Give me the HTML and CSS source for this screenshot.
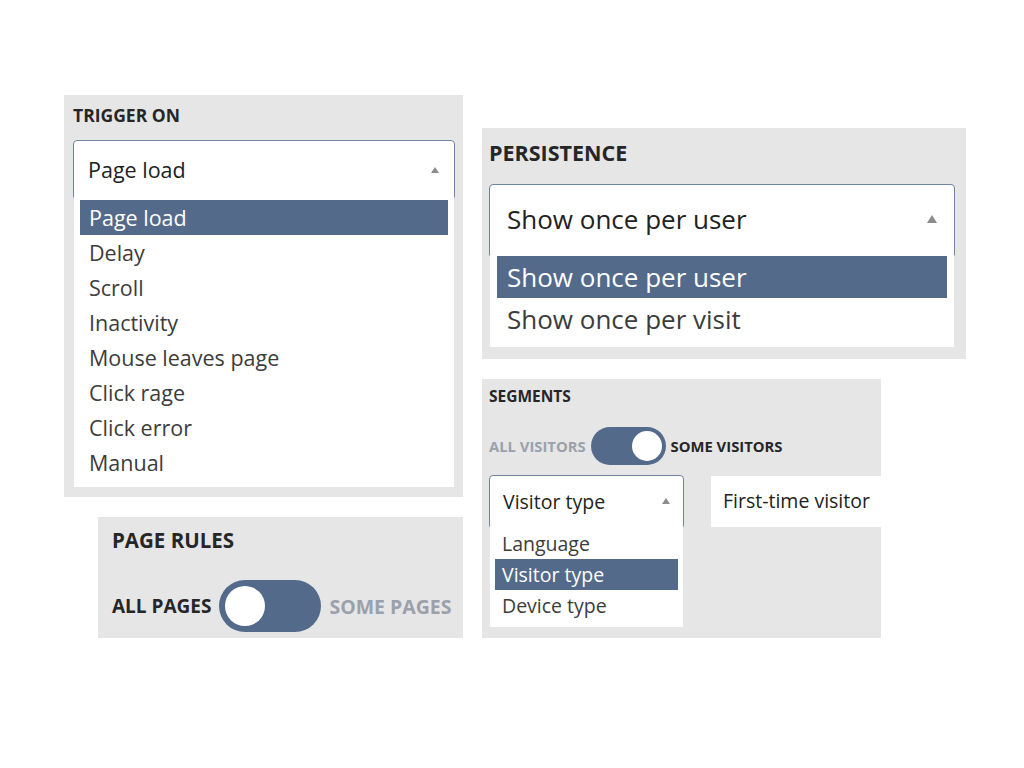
FILE: index.html
```html
<!doctype html>
<html>
  <head>
    <title>Popup settings</title>
    <meta charset="utf-8" />
    <link rel="stylesheet" href="styles.css">
  </head>
  <body>
  <div class="board">
    <div class="column column-left">

      <div class="panel panel-trigger">
        <div class="label">TRIGGER ON</div>
        <div class="select">
          <span class="value">Page load</span>
          <span class="arrow"></span>
        </div>
        <ul class="options">
          <li class="selected">Page load</li>
          <li>Delay</li>
          <li>Scroll</li>
          <li>Inactivity</li>
          <li>Mouse leaves page</li>
          <li>Click rage</li>
          <li>Click error</li>
          <li>Manual</li>
        </ul>
      </div>

      <div class="panel panel-pages">
        <div class="label">PAGE RULES</div>
        <div class="switch-row">
          <span class="switch-label on">ALL PAGES</span>
          <span class="switch"><span class="knob"></span></span>
          <span class="switch-label off">SOME PAGES</span>
        </div>
      </div>

    </div>
    <div class="column column-right">

      <div class="panel panel-persist">
        <div class="label">PERSISTENCE</div>
        <div class="select">
          <span class="value">Show once per user</span>
          <span class="arrow"></span>
        </div>
        <ul class="options">
          <li class="selected">Show once per user</li>
          <li>Show once per visit</li>
        </ul>
      </div>

      <div class="panel panel-segments">
        <div class="label">SEGMENTS</div>
        <div class="switch-row">
          <span class="switch-label off">ALL VISITORS</span>
          <span class="switch right"><span class="knob"></span></span>
          <span class="switch-label on">SOME VISITORS</span>
        </div>
        <div class="segment-row">
          <div class="segment-pick">
            <div class="select">
              <span class="value">Visitor type</span>
              <span class="arrow"></span>
            </div>
            <ul class="options">
              <li>Language</li>
              <li class="selected">Visitor type</li>
              <li>Device type</li>
            </ul>
          </div>
          <div class="segment-value">First-time visitor</div>
        </div>
      </div>

    </div>
  </div>
  </body>
</html>
```

FILE: styles.css
```css
* {
	padding:0;
	margin:0;
	box-sizing:border-box;
}

body {
	background-color:white;
	font-family:"Open Sans", "Noto Sans", sans-serif;
	color:#2b2b2b;
}

.board {
	display:flex;
	gap:19px;
	padding:95px 0 0 64px;
}

.column {
	display:flex;
	flex-direction:column;
	gap:20px;
}

.column-left {
	width:399px;
	align-items:flex-end;
}

.column-right {
	margin-top:33px;
	align-items:flex-start;
}

.panel {
	background-color:#e6e6e6;
}

.label {
	font-weight:700;
	color:#262626;
	white-space:nowrap;
}

/* select box + open list */

.select {
	display:flex;
	align-items:center;
	justify-content:space-between;
	background-color:white;
	border:1px solid #7083a0;
	border-radius:4px;
	color:#222;
}

.arrow {
	width:0;
	height:0;
	border-left:4px solid transparent;
	border-right:4px solid transparent;
	border-bottom:6px solid #8c8c8c;
}

.options {
	list-style:none;
	background-color:white;
	margin:-3px 1px 0 1px;
	color:#3c3c3c;
}

.options li.selected {
	background-color:#536a8b;
	color:white;
}

/* trigger on */

.panel-trigger {
	width:399px;
	padding:10px 8px 10px 9px;
}

.panel-trigger .label {
	font-size:17.5px;
	line-height:21px;
	margin-bottom:14px;
}

.panel-trigger .select {
	height:60px;
	padding:0 15px 1px 14px;
	font-size:21.5px;
}

.panel-trigger .options {
	padding:3px 6px 7px 6px;
}

.panel-trigger .options li {
	font-size:21.5px;
	line-height:35px;
	padding-left:9px;
}

/* persistence */

.panel-persist {
	width:484px;
	padding:13px 11px 12px 7px;
}

.panel-persist .label {
	font-size:21.5px;
	line-height:24px;
	margin-bottom:19px;
}

.panel-persist .select {
	height:74px;
	padding:0 17px 4px 17px;
	font-size:26px;
}

.panel-persist .arrow {
	border-left-width:5px;
	border-right-width:5px;
	border-bottom-width:8px;
}

.panel-persist .options {
	padding:1px 7px 7px 7px;
}

.panel-persist .options li {
	font-size:26px;
	line-height:42px;
	padding-left:10px;
}

/* segments */

.panel-segments {
	width:399px;
	padding:8px 0 11px 7px;
	overflow:hidden;
}

.panel-segments .label {
	font-size:15.5px;
	line-height:18px;
	margin-bottom:22px;
}

.panel-segments .switch-row {
	margin-bottom:10px;
}

.segment-row {
	display:flex;
	align-items:flex-start;
	gap:27px;
}

.segment-pick {
	width:195px;
}

.panel-segments .select {
	height:54px;
	padding:0 13px 2px 13px;
	font-size:19.5px;
}

.panel-segments .options {
	padding:2px 5px 6px 5px;
}

.panel-segments .options li {
	font-size:19.5px;
	line-height:31px;
	padding-left:7px;
}

.segment-value {
	flex:1;
	height:51px;
	margin-top:1px;
	padding-left:12px;
	background-color:white;
	font-size:19.5px;
	line-height:50px;
	color:#222;
	white-space:nowrap;
}

/* switches */

.switch-row {
	display:flex;
	align-items:center;
	gap:5px;
}

.switch-label {
	font-weight:700;
	font-size:14.8px;
	white-space:nowrap;
}

.switch-label.on {
	color:#262626;
}

.switch-label.off {
	color:#9aa1ab;
}

.switch {
	display:flex;
	align-items:center;
	width:75px;
	height:38px;
	padding:0 4px;
	border-radius:19px;
	background-color:#536a8b;
}

.switch.right {
	justify-content:flex-end;
}

.knob {
	width:30px;
	height:30px;
	border-radius:50%;
	background-color:white;
}

/* page rules */

.panel-pages {
	width:365px;
	padding:11px 0 6px 14px;
}

.panel-pages .label {
	font-size:20.5px;
	line-height:24px;
	margin-bottom:28px;
}

.panel-pages .switch-row {
	gap:8px;
}

.panel-pages .switch-label {
	font-size:19px;
}

.panel-pages .switch-label.off {
	font-size:19.5px;
}

.panel-pages .switch {
	width:102px;
	height:52px;
	padding:0 6px;
	border-radius:26px;
}

.panel-pages .knob {
	width:40px;
	height:40px;
}
```
